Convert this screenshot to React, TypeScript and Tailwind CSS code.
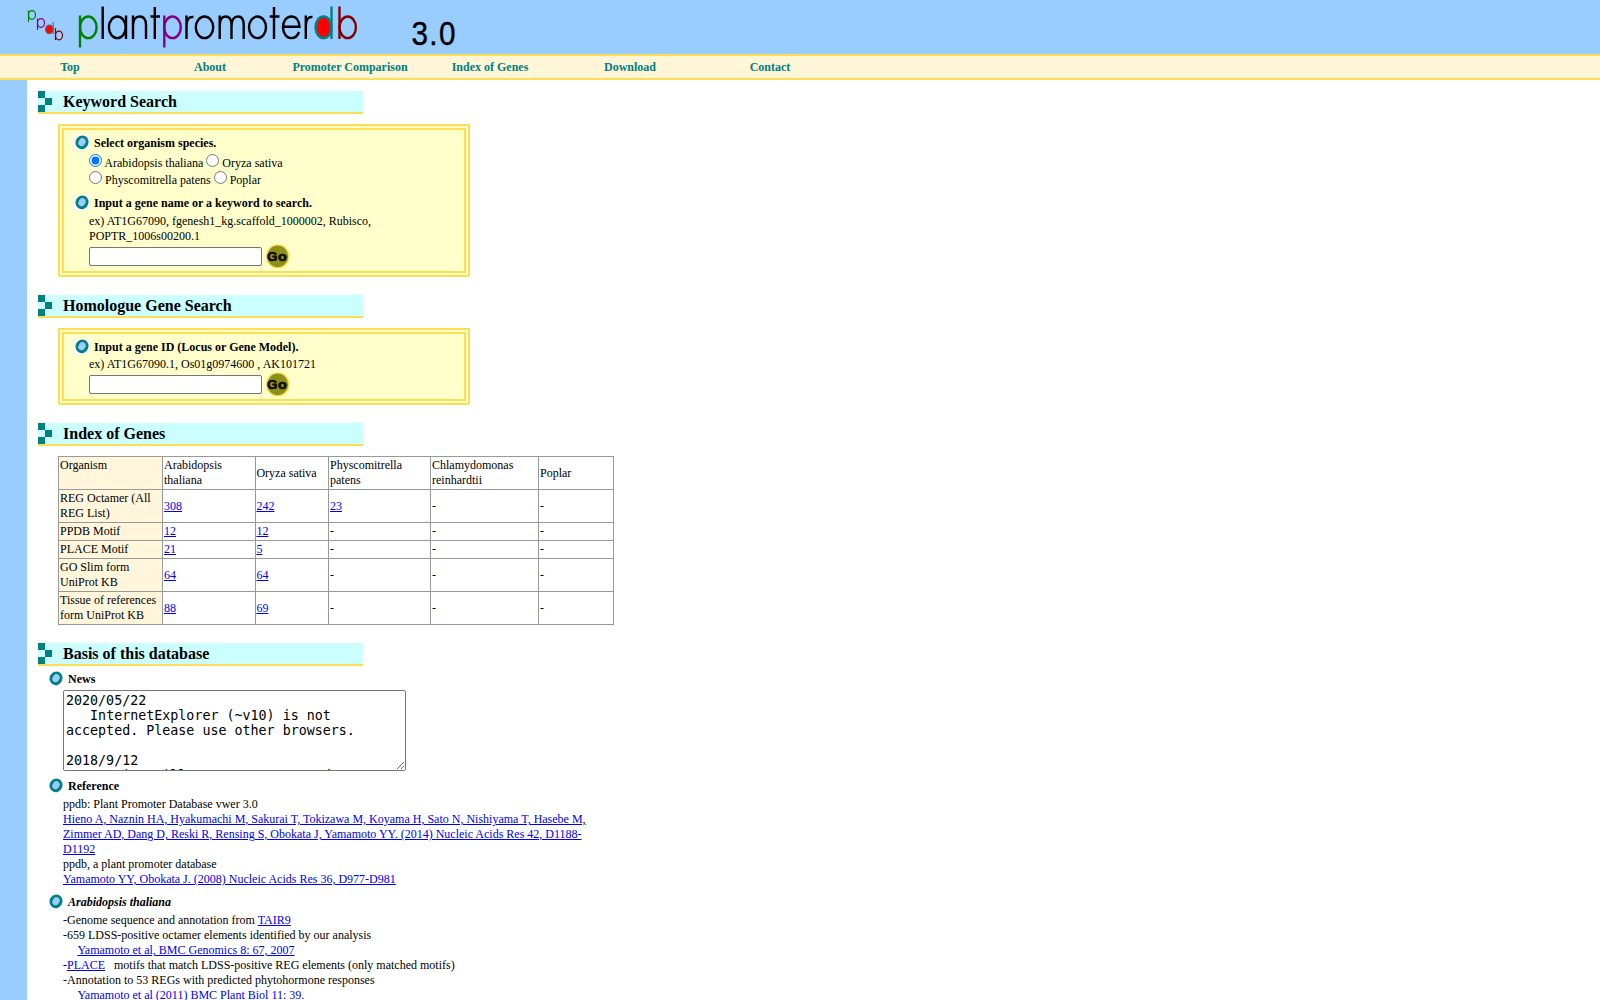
import React from "react";

function Bullet() {
  return (
    <svg className="block h-[15px] w-[15px] shrink-0 bg-white" viewBox="0 0 15 15">
      <ellipse cx="8" cy="7.3" rx="6.4" ry="6.9" fill="#008080" transform="rotate(25 8 7.3)" />
      <ellipse cx="8" cy="7.2" rx="3.4" ry="4.1" fill="#99ccff" transform="rotate(32 8 7.2)" />
    </svg>
  );
}

function Heading({ children }: { children: React.ReactNode }) {
  return (
    <h2 className="flex h-[23px] w-[325px] border-b-2 border-[#ffdd55] bg-[#ccffff] text-[16px] leading-[21px] font-bold">
      <svg className="mr-[11px] h-[21px] w-[14px] shrink-0" viewBox="0 0 14 21" shapeRendering="crispEdges">
        <path d="M0 0h7v7H0zM7 7h7v7H7zM0 14h7v7H0z" fill="#008080" />
      </svg>
      {children}
    </h2>
  );
}

function Label({ children }: { children: React.ReactNode }) {
  return (
    <h3 className="flex h-[15px] gap-[5px] text-[12px] leading-[17px] font-bold">
      <Bullet />
      <span>{children}</span>
    </h3>
  );
}

function Box({ className, children }: { className: string; children: React.ReactNode }) {
  return (
    <div className={"ml-[20px] w-[412px] border-[6px] border-double border-[#ffdd55] bg-[#ffffcc] pl-[10px] " + className}>
      {children}
    </div>
  );
}

function SearchRow() {
  return (
    <div className="ml-[15px] flex h-[25px] items-start">
      <input
        type="text"
        className="mt-[3px] h-[19px] w-[173px] rounded-[2px] border border-[#767676] bg-white"
      />
      <svg className="ml-[4px] h-[25px] w-[24px]" viewBox="0 0 24 25">
        <ellipse cx="11.7" cy="12.4" rx="11.1" ry="11.5" fill="#8f8f1e" stroke="#ffdd55" strokeWidth="1.4" />
        <g fontFamily="Liberation Sans" fontWeight="bold" fontSize="12.4" fill="#0a0a00" stroke="#0a0a00" strokeWidth="0.6">
          <text x="1" y="16.7" textLength="10.4" lengthAdjust="spacingAndGlyphs">G</text>
          <text x="12" y="16.7" textLength="8.8" lengthAdjust="spacingAndGlyphs">o</text>
        </g>
      </svg>
    </div>
  );
}

function Radio({ checked }: { checked?: boolean }) {
  return <input type="radio" name="species" defaultChecked={checked} className="m-0 h-[13px] w-[13px] align-baseline" />;
}

function Link({ children }: { children: React.ReactNode }) {
  return <a href="#" className="text-[#0000ee] underline">{children}</a>;
}

const nav = ["Top", "About", "Promoter Comparison", "Index of Genes", "Download", "Contact"];

const rows: { name: string; h: string; cells: string[] }[] = [
  { name: "REG Octamer (All REG List)", h: "h-[33px]", cells: ["308", "242", "23", "-", "-"] },
  { name: "PPDB Motif", h: "h-[18px]", cells: ["12", "12", "-", "-", "-"] },
  { name: "PLACE Motif", h: "h-[18px]", cells: ["21", "5", "-", "-", "-"] },
  { name: "GO Slim form UniProt KB", h: "h-[33px]", cells: ["64", "64", "-", "-", "-"] },
  { name: "Tissue of references form UniProt KB", h: "h-[33px]", cells: ["88", "69", "-", "-", "-"] },
];

const news = `2020/05/22
   InternetExplorer (~v10) is not accepted. Please use other browsers.

2018/9/12
   service will move to our new data center.
`;

function Logo() {
  return (
    <svg className="block h-[54px] w-[480px]" viewBox="0 0 480 54" fill="none">
      <g strokeWidth="1.2">
        <path d="M28.5 10.5V22" stroke="#008000" />
        <ellipse cx="32" cy="15" rx="3.5" ry="4.3" stroke="#008000" />
        <path d="M37.5 18.5V30" stroke="#800080" />
        <ellipse cx="41" cy="23" rx="3.5" ry="4.3" stroke="#800080" />
        <path d="M53.2 22V34" stroke="#3399aa" strokeWidth="1.6" />
        <ellipse cx="49.3" cy="29.4" rx="3.6" ry="4.2" fill="#ff0000" stroke="#8c4a50" />
        <path d="M55.5 28V40" stroke="#800000" />
        <ellipse cx="59" cy="35.5" rx="3.5" ry="4.3" stroke="#800000" />
      </g>
      <g strokeWidth="2.4">
        <path d="M80 15.5V47.5" stroke="#008000" />
        <ellipse cx="88.3" cy="27.3" rx="8.3" ry="10.8" stroke="#008000" />
        <g stroke="#000000">
          <path d="M102.7 6.5V39" />
          <ellipse cx="117.3" cy="27.3" rx="8.4" ry="10.8" />
          <path d="M126 15.5V39" />
          <path d="M133 15.5V39M133 26C133 19.5 136 16.5 139.5 16.5C144 16.5 146 19.5 146 25V39" />
          <path d="M154.8 7V39M150.5 16.5H160" />
        </g>
        <path d="M164.3 15.5V47.5" stroke="#800080" />
        <ellipse cx="172.5" cy="27.3" rx="8.3" ry="10.8" stroke="#800080" />
        <g stroke="#000000">
          <path d="M186.5 15.5V39M186.5 26C186.5 19.5 189 16.5 193.5 17" />
          <ellipse cx="204.5" cy="27.3" rx="8.7" ry="10.8" />
          <path d="M219.7 15.5V39M219.7 26C219.7 19.5 222 16.5 225.5 16.5C230 16.5 231.5 19.5 231.5 25V39M231.5 26C231.5 19.5 234.5 16.5 238 16.5C242.3 16.5 243.7 19.5 243.7 25V39" />
          <ellipse cx="257.5" cy="27.3" rx="8.5" ry="10.8" />
          <path d="M274 7V39M269.7 16.5H279.5" />
          <path d="M283 26.8H299.5C299.2 20.5 296 16.5 291.3 16.5C286.5 16.5 283 21 283 27.3C283 33.5 286.5 38.1 291.3 38.1C295 38.1 297.5 36 299 32" />
          <path d="M305.8 15.5V39M305.8 26C305.8 19.5 308.5 16.5 312.5 17" />
        </g>
        <path d="M331.5 6.5V39" stroke="#008080" />
        <ellipse cx="323.5" cy="27.3" rx="8" ry="10.8" fill="#ff0000" stroke="#008080" />
        <path d="M339.5 6.5V39" stroke="#800000" />
        <ellipse cx="347.7" cy="27.3" rx="8.2" ry="10.8" stroke="#800000" />
      </g>
      <text transform="translate(411.5 45) scale(0.9 1)" fontFamily="Liberation Sans" fontSize="33" letterSpacing="1.5" fill="#000000" stroke="#000000" strokeWidth="0.4">3.0</text>
    </svg>
  );
}

export default function App() {
  return (
    <div className="flex h-[1000px] w-full flex-col overflow-hidden bg-white font-['Liberation_Serif',serif] text-[12px] leading-[15px] text-black">
      <header className="h-[54px] shrink-0 bg-[#99ccff]">
        <Logo />
      </header>
      <nav className="flex h-[26px] shrink-0 border-y-2 border-[#ffdd55] bg-[#fff5d7] leading-[22px] font-bold text-[#008080]">
        {nav.map((n) => (
          <a key={n} href="#" className="w-[140px] text-center">{n}</a>
        ))}
      </nav>
      <div className="flex min-h-0 flex-1">
        <div className="w-[27px] shrink-0 bg-[#99ccff]" />
        <main className="w-[600px] overflow-hidden pt-[11px] pl-[11px]">
          <Heading>Keyword Search</Heading>
          <Box className="mt-[10px] mb-[18px] h-[153px] pt-[5px]">
            <Label>Select organism species.</Label>
            <div className="mt-[4px] mb-[7px] ml-[15px] leading-[17px]">
              <div className="h-[17px]"><Radio checked /> Arabidopsis thaliana <Radio /> Oryza sativa</div>
              <div className="h-[17px]"><Radio /> Physcomitrella patens <Radio /> Poplar</div>
            </div>
            <Label>Input a gene name or a keyword to search.</Label>
            <p className="mt-[4px] ml-[15px] h-[30px] w-[300px]">
              ex) AT1G67090, fgenesh1_kg.scaffold_1000002, Rubisco, POPTR_1006s00200.1
            </p>
            <SearchRow />
          </Box>
          <Heading>Homologue Gene Search</Heading>
          <Box className="mt-[10px] mb-[18px] h-[77px] pt-[5px]">
            <Label>Input a gene ID (Locus or Gene Model).</Label>
            <p className="mt-[3px] ml-[15px] h-[15px]">ex) AT1G67090.1, Os01g0974600 , AK101721</p>
            <SearchRow />
          </Box>
          <Heading>Index of Genes</Heading>
          <table className="mt-[10px] mb-[18px] ml-[20px] w-[556px] table-fixed border-collapse [&_td]:border [&_td]:border-[#999999] [&_td]:px-px [&_td]:py-0 [&_td:nth-child(3)]:pl-[0.4px]">
            <colgroup>
              <col className="w-[104px]" />
              <col className="w-[93px]" />
              <col className="w-[73px]" />
              <col className="w-[102px]" />
              <col className="w-[108px]" />
              <col className="w-[75px]" />
            </colgroup>
            <tbody>
              <tr className="h-[33px]">
                <td className="bg-[#fff6dc] align-top"><div className="pt-px">Organism</div></td>
                <td>Arabidopsis thaliana</td>
                <td>Oryza sativa</td>
                <td>Physcomitrella patens</td>
                <td>Chlamydomonas reinhardtii</td>
                <td>Poplar</td>
              </tr>
              {rows.map((r) => (
                <tr key={r.name} className={r.h}>
                  <td className="bg-[#fff6dc]">{r.name}</td>
                  {r.cells.map((c, i) => (
                    <td key={i}>{c === "-" ? c : <Link>{c}</Link>}</td>
                  ))}
                </tr>
              ))}
            </tbody>
          </table>
          <Heading>Basis of this database</Heading>
          <div className="pt-[5px] pl-[10px]">
            <Label>News</Label>
            <textarea
              readOnly
              value={news}
              className="mt-[4px] ml-[15px] block h-[81px] w-[343px] resize overflow-auto rounded-[2px] border border-[#767676] bg-white p-[2px] font-['DejaVu_Sans_Mono',monospace] text-[13.333px] leading-[15px] [scrollbar-width:none]"
            />
            <div className="mt-[7px]"><Label>Reference</Label></div>
            <div className="mt-[4px] ml-[15px] w-[535px]">
              <p>ppdb: Plant Promoter Database vwer 3.0</p>
              <p><Link>Hieno A, Naznin HA, Hyakumachi M, Sakurai T, Tokizawa M, Koyama H, Sato N, Nishiyama T, Hasebe M, Zimmer AD, Dang D, Reski R, Rensing S, Obokata J, Yamamoto YY. (2014) Nucleic Acids Res 42, D1188-D1192</Link></p>
              <p>ppdb, a plant promoter database</p>
              <p><Link>Yamamoto YY, Obokata J. (2008) Nucleic Acids Res 36, D977-D981</Link></p>
            </div>
            <div className="mt-[7px] italic"><Label>Arabidopsis thaliana</Label></div>
            <div className="mt-[4px] ml-[15px] whitespace-nowrap">
              <p>-Genome sequence and annotation from <Link>TAIR9</Link></p>
              <p>-659 LDSS-positive octamer elements identified by our analysis</p>
              <p className="pl-[14.4px]"><Link>Yamamoto et al, BMC Genomics 8: 67, 2007</Link></p>
              <p>-<Link>PLACE</Link>{"\u00a0\u00a0 "}motifs that match LDSS-positive REG elements (only matched motifs)</p>
              <p>-Annotation to 53 REGs with predicted phytohormone responses</p>
              <p className="pl-[14.4px]"><Link>Yamamoto et al (2011) BMC Plant Biol 11: 39.</Link></p>
            </div>
          </div>
        </main>
      </div>
    </div>
  );
}
